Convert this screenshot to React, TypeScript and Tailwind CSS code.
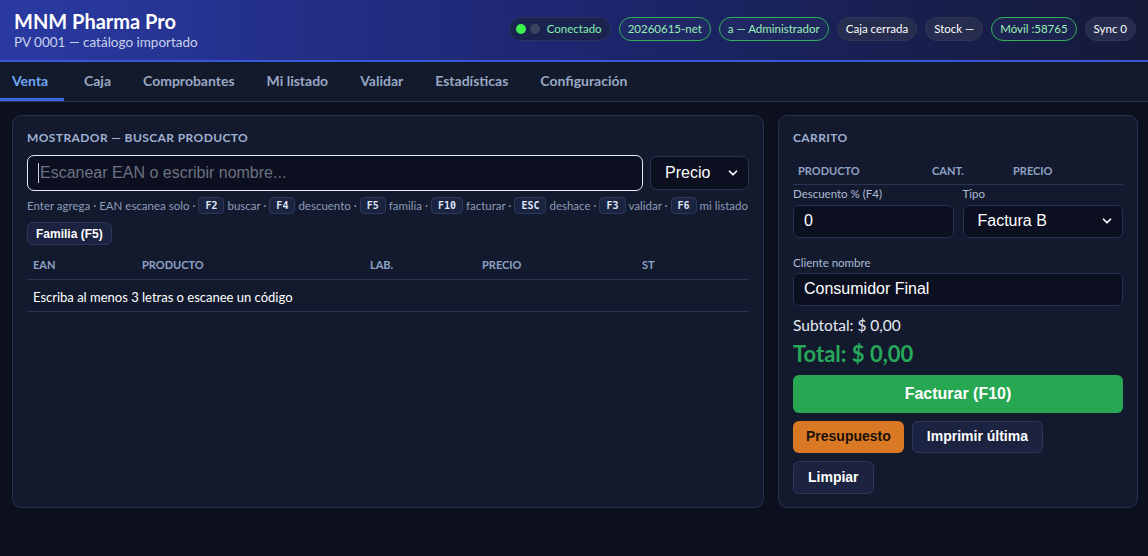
import React from 'react';
import { ChevronDown } from 'lucide-react';

const ui = "font-['Lato','Noto_Sans',sans-serif]";
const arial = "font-['Liberation_Sans',Arial,sans-serif]";

const pills = [
  { label: '20260615-net', ok: true },
  { label: 'a — Administrador', ok: true },
  { label: 'Caja cerrada', ok: false },
  { label: 'Stock —', ok: false },
  { label: 'Móvil :58765', ok: true },
  { label: 'Sync 0', ok: false },
];

const tabs = ['Venta', 'Caja', 'Comprobantes', 'Mi listado', 'Validar', 'Estadísticas', 'Configuración'];

const Kbd = ({ children }: { children: React.ReactNode }) => (
  <span className="mx-[3px] inline-flex h-[17px] items-center rounded-[4px] border border-[#2c3858] bg-[#1a2340] px-[6px] font-['DejaVu_Sans_Mono',monospace] text-[10px] font-bold text-[#dfe6f5]">
    {children}
  </span>
);

const Header = () => (
  <header className="flex h-[62px] items-center justify-between border-b-2 border-[#3857d8] bg-gradient-to-r from-[#2a3aa2] via-[#1d2670] to-[#151a38] pl-[14px] pr-[12px]">
    <div>
      <div className="text-[20px] font-bold leading-[24px] text-white">MNM Pharma Pro</div>
      <div className="text-[13.5px] leading-[18px] text-[#c9d2ee]">PV 0001 — catálogo importado</div>
    </div>
    <div className="flex items-center gap-[8px] pb-[2px] text-[11.5px]">
      <div className="flex h-[24px] items-center gap-[4px] rounded-full border border-[#2a3358] bg-[#1a2250] pl-[6px] pr-[8px] text-[#86efac]">
        <span className="h-[10px] w-[10px] rounded-full bg-[#3df04e]" />
        <span className="mr-[3px] h-[10px] w-[10px] rounded-full bg-[#3c435e]" />
        Conectado
      </div>
      {pills.map((p) => (
        <div
          key={p.label}
          className={
            p.ok
              ? 'flex h-[24px] items-center rounded-full border border-[#2fb25a] bg-[#27306a]/40 px-[8px] text-[#9af0b4]'
              : 'flex h-[24px] items-center rounded-full border border-[#2e3658] bg-[#262d4e] px-[8px] text-white'
          }
        >
          {p.label}
        </div>
      ))}
    </div>
  </header>
);

const Nav = () => (
  <nav className="flex h-[40px] gap-[8px] border-b border-[#2a3350] bg-[#131a2c]">
    {tabs.map((t, i) => (
      <div
        key={t}
        className={
          i === 0
            ? 'flex w-[64px] items-center border-b-[3px] border-[#3d66e0] pl-[12px] pt-[1px] text-[14px] font-bold text-[#6ea8f5]'
            : 'flex items-center px-[12px] pb-[2px] text-[14px] font-bold text-[#98a8c4]'
        }
      >
        {t}
      </div>
    ))}
  </nav>
);

const th = 'px-[6px] pb-[5px] text-left text-[11px] font-bold uppercase text-[#8ea2c6]';

const Mostrador = () => (
  <section className="rounded-[9px] border border-[#243050] bg-[#131a2d] px-[14px] pt-[13px]">
    <h2 className="text-[12px] font-bold uppercase tracking-[0.4px] leading-[18px] text-[#9fb1d2]">
      Mostrador — buscar producto
    </h2>
    <div className="mt-[8px] flex gap-[7px]">
      <div className={`flex h-[36px] flex-1 items-center rounded-[7px] border border-[#e8ecf5] bg-[#0b0f1f] pl-[10px] text-[16px] text-[#6b7280] ${arial}`}>
        <span className="mr-[1px] h-[20px] w-px bg-[#c9cfdb]" />
        Escanear EAN o escribir nombre...
      </div>
      <div className={`flex h-[34px] w-[99px] items-center justify-between self-center rounded-[7px] border border-[#263252] bg-[#0b0f1f] pl-[14px] pr-[8px] text-[16px] text-white ${arial}`}>
        Precio
        <ChevronDown size={14} strokeWidth={3} />
      </div>
    </div>
    <div className="mt-[6px] flex items-center whitespace-nowrap text-[11.5px] text-[#8b9bbb]">
      Enter agrega · EAN escanea solo ·<Kbd>F2</Kbd>buscar ·<Kbd>F4</Kbd>descuento ·<Kbd>F5</Kbd>familia ·
      <Kbd>F10</Kbd>facturar ·<Kbd>ESC</Kbd>deshace ·<Kbd>F3</Kbd>validar ·<Kbd>F6</Kbd>mi listado
    </div>
    <button className={`mt-[8px] h-[23px] rounded-[6px] border border-[#2b3658] bg-[#1b2340] px-[8px] text-[12px] font-bold text-white ${arial}`}>
      Familia (F5)
    </button>
    <table className="mt-[12px] w-full table-fixed border-collapse">
      <thead>
        <tr className="border-b border-[#2a3555]">
          <th className={`${th} w-[109px]`}>EAN</th>
          <th className={`${th} w-[228px]`}>Producto</th>
          <th className={`${th} w-[112px]`}>Lab.</th>
          <th className={`${th} w-[160px]`}>Precio</th>
          <th className={th}>St</th>
        </tr>
      </thead>
      <tbody>
        <tr className="border-b border-[#2a3555]">
          <td colSpan={5} className="px-[6px] pb-[6px] pt-[10px] text-[13px] leading-[15px] text-white">
            Escriba al menos 3 letras o escanee un código
          </td>
        </tr>
      </tbody>
    </table>
  </section>
);

const field = `flex h-[33px] items-center rounded-[6px] border border-[#263252] bg-[#0b0f1f] px-[10px] text-[16px] text-white ${arial}`;

const Carrito = () => (
  <section className="rounded-[9px] border border-[#243050] bg-[#131a2d] px-[14px] pb-[13px] pt-[13px]">
    <h2 className="text-[12px] font-bold uppercase tracking-[0.4px] leading-[18px] text-[#9fb1d2]">Carrito</h2>
    <div className="mt-[16px] flex border-b border-[#2a3555] pb-[4px] text-[11px] font-bold uppercase text-[#8ea2c6]">
      <span className="w-[139px] pl-[5px]">Producto</span>
      <span className="w-[81px]">Cant.</span>
      <span>Precio</span>
    </div>
    <div className="mt-[1px] grid grid-cols-2 gap-x-[9px] text-[11.5px] text-[#aebbd6]">
      <div>
        <div className="mb-[3px] leading-[16px]">Descuento % (F4)</div>
        <div className={field}>0</div>
      </div>
      <div>
        <div className="mb-[3px] leading-[16px]">Tipo</div>
        <div className={`${field} justify-between pl-[14px] pr-[8px]`}>
          Factura B
          <ChevronDown size={14} strokeWidth={3} />
        </div>
      </div>
    </div>
    <div className="mt-[17px] text-[11.5px] leading-[16px] text-[#aebbd6]">Cliente nombre</div>
    <div className={`${field} mt-[2px]`}>Consumidor Final</div>
    <div className="mt-[9px] text-[15.5px] leading-[20px] text-[#e5e9f2]">Subtotal: $ 0,00</div>
    <div className="mt-[6px] text-[22px] font-bold leading-[26px] text-[#27a85a]">Total: $ 0,00</div>
    <button className={`mt-[8px] h-[38px] w-full rounded-[6px] bg-[#28a753] text-[16px] font-bold text-white ${arial}`}>
      Facturar (F10)
    </button>
    <div className={`mt-[8px] flex flex-wrap gap-[8px] text-[14px] font-bold ${arial}`}>
      <button className="h-[32px] rounded-[6px] bg-[#d97923] px-[13px] text-[#1a1208]">Presupuesto</button>
      <button className="h-[32px] rounded-[6px] border border-[#2b3658] bg-[#1b2340] px-[14px] text-white">
        Imprimir última
      </button>
    </div>
    <button className={`mt-[8px] h-[33px] rounded-[6px] border border-[#2b3658] bg-[#1b2340] px-[14px] text-[14px] font-bold text-white ${arial}`}>
      Limpiar
    </button>
  </section>
);

export default function App() {
  return (
    <div className={`min-h-[556px] bg-[#0c0f1e] ${ui}`}>
      <Header />
      <Nav />
      <main className="grid grid-cols-[minmax(0,1fr)_360px] items-stretch gap-[14px] pl-[12px] pr-[10px] pt-[13px]">
        <Mostrador />
        <Carrito />
      </main>
    </div>
  );
}
